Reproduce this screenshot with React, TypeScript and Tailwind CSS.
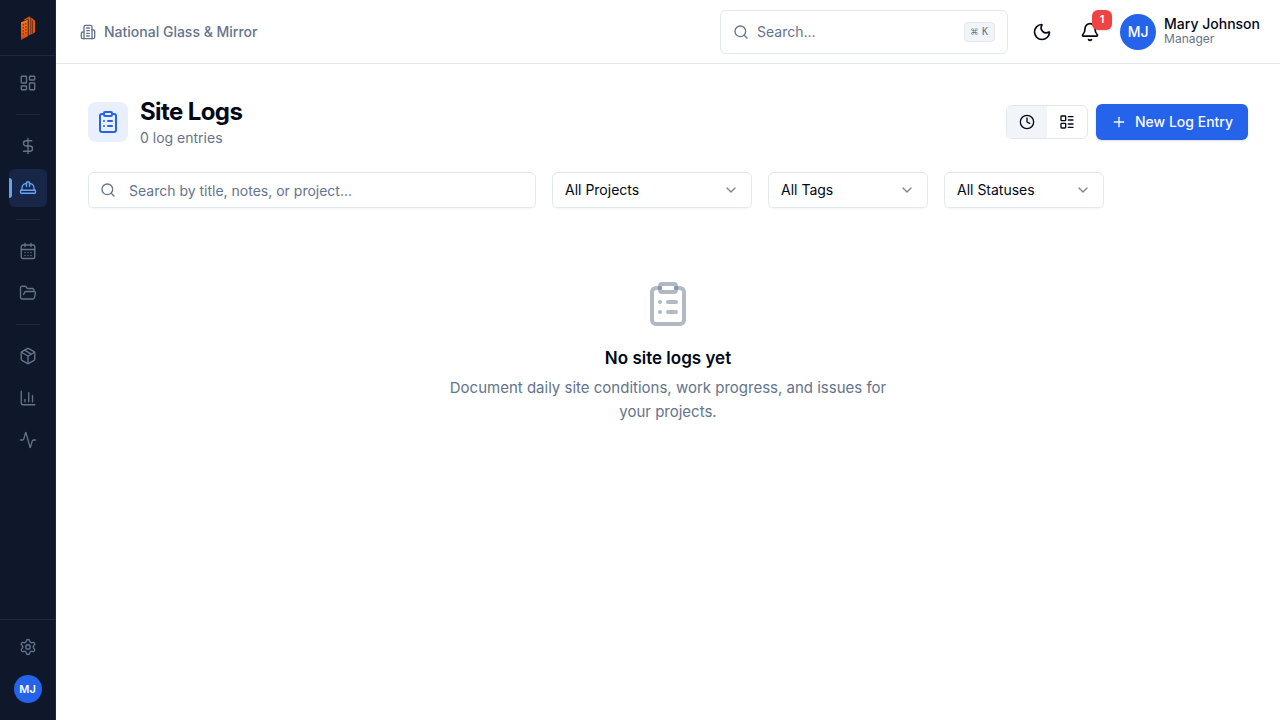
import type { ReactNode } from "react";
import {
  Activity,
  Bell,
  CalendarDays,
  ChartColumn,
  ChevronDown,
  ClipboardList,
  Clock,
  DollarSign,
  FolderOpen,
  HardHat,
  LayoutDashboard,
  LayoutList,
  Moon,
  Package,
  Plus,
  Search,
  Settings,
  type LucideIcon,
} from "lucide-react";

type NavItem = { label: string; icon: LucideIcon; active?: boolean };

const navGroups: NavItem[][] = [
  [{ label: "Dashboard", icon: LayoutDashboard }],
  [
    { label: "Finance", icon: DollarSign },
    { label: "Site Logs", icon: HardHat, active: true },
  ],
  [
    { label: "Calendar", icon: CalendarDays },
    { label: "Documents", icon: FolderOpen },
  ],
  [
    { label: "Inventory", icon: Package },
    { label: "Reports", icon: ChartColumn },
    { label: "Activity", icon: Activity },
  ],
];

function Logo() {
  return (
    <svg viewBox="0 0 28 28" className="size-7" aria-hidden="true">
      <defs>
        <linearGradient id="tower" x1="0" y1="0" x2="0" y2="1">
          <stop offset="0" stopColor="#f97316" />
          <stop offset="0.7" stopColor="#f05a05" />
          <stop offset="1" stopColor="#dc2f12" />
        </linearGradient>
      </defs>
      <path d="M7 8.2 14 5.6v16.6L7 26Z" fill="url(#tower)" />
      <path d="M9.6 5.8 15.8 2.2v1.6l-4.6 2.4Z" fill="#ea580c" />
      <path d="M14.4 4.6 16.6 3.2v17.4l-2.2 1.2Z" fill="#f05a05" />
      <path d="m17.2 3.6 3.8 3.2v11.4l-3.8 2.2Z" fill="#ea580c" />
      <path
        d="M9.2 10.2v1.4M11.8 9.2v1.4M9.2 13.2v1.4M11.8 12.2v1.4M9.2 16.2v1.4M11.8 15.2v1.4M9.2 19.2v1.4M11.8 18.2v1.4"
        stroke="#5b220f"
        strokeWidth="1.2"
      />
      <path d="M14.2 6v15.8M18.6 6.4v13" stroke="#0f172a" strokeWidth="0.6" />
    </svg>
  );
}

function BuildingIcon() {
  return (
    <svg
      viewBox="0 0 24 24"
      fill="none"
      stroke="currentColor"
      strokeWidth="2"
      strokeLinecap="round"
      strokeLinejoin="round"
      className="size-4"
      aria-hidden="true"
    >
      <path d="M6 22V4a2 2 0 0 1 2-2h8a2 2 0 0 1 2 2v18Z" />
      <path d="M6 12H4a2 2 0 0 0-2 2v6a2 2 0 0 0 2 2h2" />
      <path d="M18 9h2a2 2 0 0 1 2 2v9a2 2 0 0 1-2 2h-2" />
      <path d="M10 6h4M10 10h4M10 14h4M10 18h4" />
    </svg>
  );
}

function SideLink({ label, icon: Icon, active }: NavItem) {
  return (
    <a
      href="#"
      aria-label={label}
      aria-current={active ? "page" : undefined}
      className={
        active
          ? "relative flex size-[38px] items-center justify-center overflow-hidden rounded-md bg-[#172647] text-[#60a5fa]"
          : "relative flex size-[38px] items-center justify-center rounded-md text-[#64748b]"
      }
    >
      {active && <span className="absolute left-0 h-5 w-[3px] rounded-r-full bg-[#60a5fa]" />}
      <Icon className="size-[18px]" strokeWidth={1.8} />
    </a>
  );
}

function Sidebar() {
  return (
    <aside className="flex w-14 shrink-0 flex-col border-r border-[#1e293b] bg-[#0f172a]">
      <div className="flex h-14 items-center justify-center border-b border-[#1e293b]">
        <Logo />
      </div>
      <nav aria-label="Main" className="flex flex-1 flex-col items-center py-2">
        {navGroups.map((group, i) => (
          <div key={i} className="flex flex-col items-center gap-1">
            {i > 0 && <hr className="mt-3 mb-2 w-6 border-t border-[#1e293b]" />}
            {group.map((item) => (
              <SideLink key={item.label} {...item} />
            ))}
          </div>
        ))}
      </nav>
      <div className="flex flex-col items-center gap-1 border-t border-[#1e293b] pt-2 pb-3">
        <SideLink label="Settings" icon={Settings} />
        <button type="button" aria-label="Account" className="flex size-[38px] items-center justify-center">
          <span className="flex size-7 items-center justify-center rounded-full bg-[#2563eb] text-[11px] font-semibold text-white">
            MJ
          </span>
        </button>
      </div>
    </aside>
  );
}

function TopBar() {
  return (
    <header className="flex h-16 shrink-0 items-center justify-between border-b border-[#e2e8f0] pr-5 pl-6">
      <div className="flex items-center gap-2 text-sm font-medium text-[#64748b]">
        <BuildingIcon />
        National Glass &amp; Mirror
      </div>
      <div className="flex items-center">
        <button
          type="button"
          className="mr-3 flex h-11 w-72 items-center gap-2 rounded-md border border-[#e2e8f0] px-3 text-sm text-[#64748b]"
        >
          <Search className="size-4" />
          <span>Search...</span>
          <kbd className="ml-auto flex h-5 items-center gap-1 rounded border border-[#e2e8f0] bg-[#f1f5f9] px-1.5 font-['DejaVu_Sans_Mono',monospace] text-[10px] leading-none font-medium">
            <span className="text-xs leading-none">⌘</span>
            <span>K</span>
          </kbd>
        </button>
        <button type="button" aria-label="Toggle theme" className="flex size-11 items-center justify-center">
          <Moon className="size-5" />
        </button>
        <button type="button" aria-label="Notifications" className="relative ml-1 flex size-11 items-center justify-center">
          <Bell className="size-5" />
          <span className="absolute top-0 right-0 flex size-5 items-center justify-center rounded-md bg-[#ef4444] text-[11px] font-semibold text-white shadow-sm">
            1
          </span>
        </button>
        <button type="button" className="ml-2 flex items-center gap-2 text-left">
          <span className="flex size-9 items-center justify-center rounded-full bg-[#2563eb] text-sm font-medium text-white">
            MJ
          </span>
          <span className="flex flex-col pb-0.5">
            <span className="text-sm leading-4 font-medium">Mary Johnson</span>
            <span className="text-xs leading-[14px] text-[#64748b]">Manager</span>
          </span>
        </button>
      </div>
    </header>
  );
}

function FilterSelect({ label, children, narrow }: { label: string; children: ReactNode; narrow?: boolean }) {
  return (
    <div className={narrow ? "relative w-40" : "relative w-50"}>
      <select
        aria-label={label}
        className="h-9 w-full appearance-none rounded-md border border-[#e2e8f0] bg-white px-3 text-sm shadow-xs"
      >
        {children}
      </select>
      <ChevronDown className="pointer-events-none absolute top-[10px] right-[13px] size-4 opacity-50" />
    </div>
  );
}

export default function App() {
  return (
    <div className="flex min-h-screen bg-white font-['Inter',sans-serif] text-[#020817]">
      <Sidebar />
      <div className="flex min-w-0 flex-1 flex-col">
        <TopBar />
        <main className="flex flex-col gap-6 p-8">
          <div className="flex items-center justify-between">
            <div className="flex items-center gap-3">
              <div className="flex size-10 items-center justify-center rounded-lg bg-[#e9effd] text-[#2563eb]">
                <ClipboardList className="size-6" />
              </div>
              <div>
                <h1 className="text-2xl font-bold tracking-tight">Site Logs</h1>
                <p className="text-sm text-[#64748b]">0 log entries</p>
              </div>
            </div>
            <div className="flex items-center gap-2">
              <div className="flex overflow-hidden rounded-md border border-[#e2e8f0]">
                <button type="button" aria-label="Timeline view" className="flex h-8 w-10 items-center justify-center bg-[#f1f5f9]">
                  <Clock className="size-4" />
                </button>
                <button type="button" aria-label="List view" className="flex h-8 w-10 items-center justify-center">
                  <LayoutList className="size-4" />
                </button>
              </div>
              <button
                type="button"
                className="flex h-9 items-center gap-2 rounded-md bg-[#2563eb] px-[15px] text-sm font-medium text-[#f8fafc] shadow-sm"
              >
                <Plus className="size-4" />
                New Log Entry
              </button>
            </div>
          </div>

          <div className="flex items-center gap-4">
            <div className="relative w-full max-w-md">
              <Search className="absolute top-[10px] left-3 size-4 text-[#64748b]" />
              <input
                type="text"
                aria-label="Search site logs"
                placeholder="Search by title, notes, or project..."
                className="block h-9 w-full rounded-md border border-[#e2e8f0] bg-white pr-3 pl-10 text-sm shadow-xs placeholder:text-[#64748b]"
              />
            </div>
            <FilterSelect label="Project">
              <option>All Projects</option>
            </FilterSelect>
            <FilterSelect label="Tag" narrow>
              <option>All Tags</option>
            </FilterSelect>
            <FilterSelect label="Status" narrow>
              <option>All Statuses</option>
            </FilterSelect>
          </div>

          <section className="flex flex-col items-center py-12 text-center">
            <ClipboardList className="mb-4 size-12 text-[#64748b]/50" />
            <h2 className="text-[17px] leading-7 font-semibold">No site logs yet</h2>
            <p className="mt-1 max-w-md text-[15px] leading-6 text-[#64748b]">
              Document daily site conditions, work progress, and issues for your projects.
            </p>
          </section>
        </main>
      </div>
    </div>
  );
}
